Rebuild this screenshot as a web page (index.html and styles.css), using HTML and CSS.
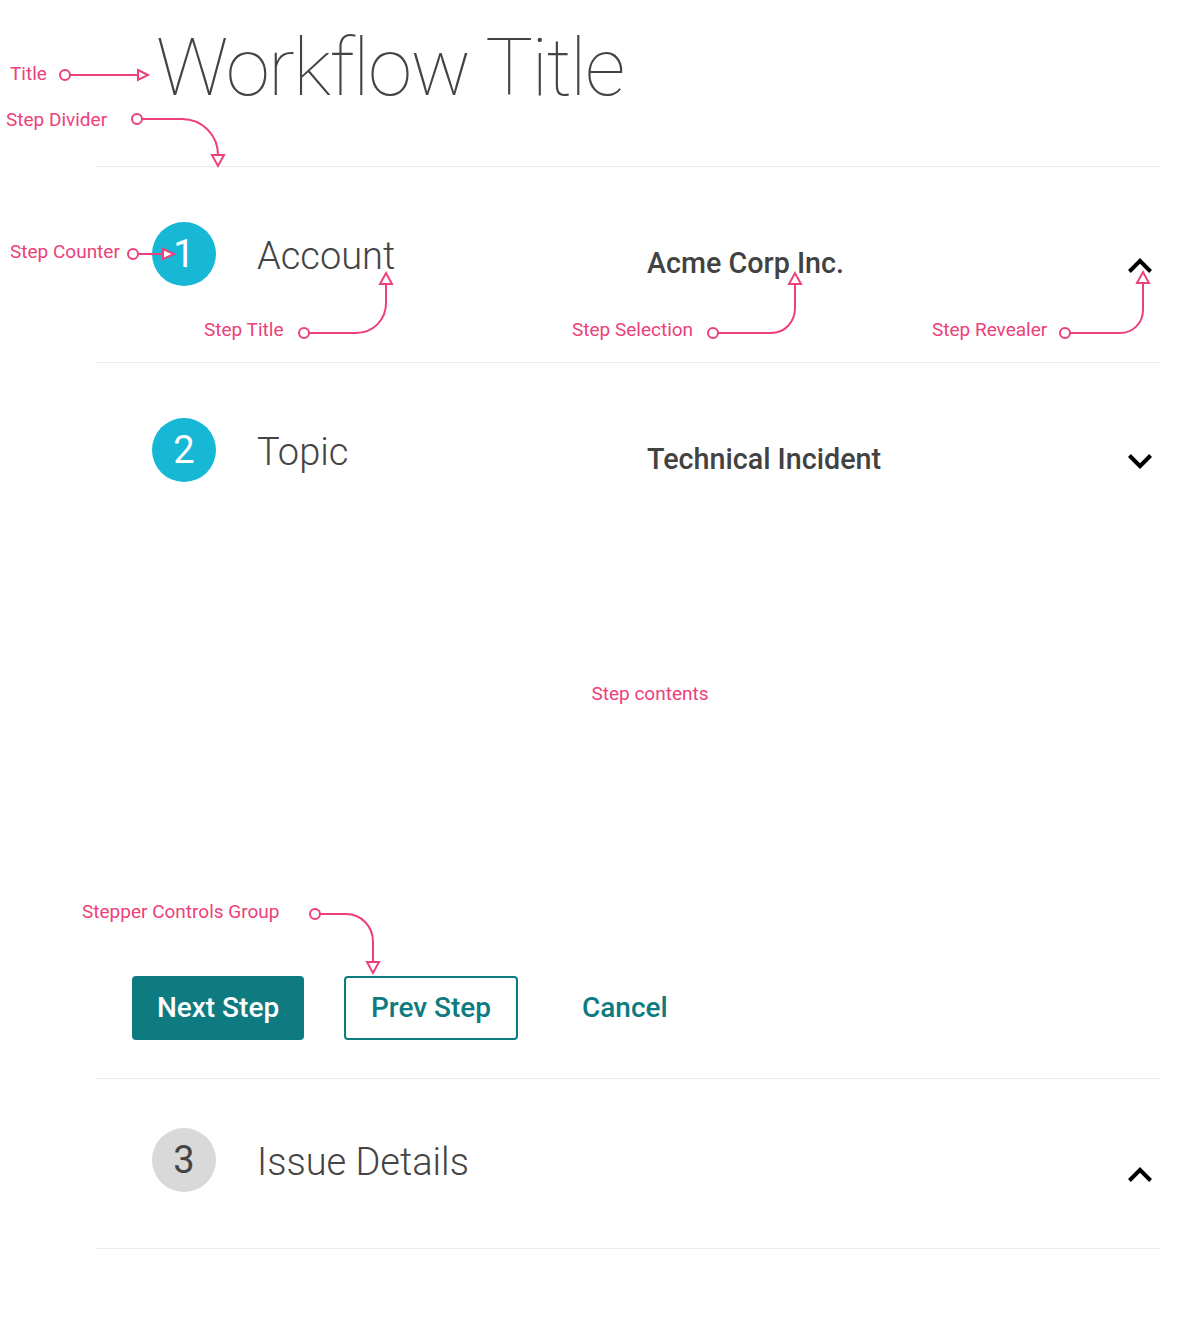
FILE: index.html
```html
<!DOCTYPE html>
<html lang="en">
<head>
<meta charset="utf-8">
<title>Workflow Title</title>
<link rel="stylesheet" href="styles.css">
</head>
<body>
<div class="page">
  <h1 class="title">Workflow Title</h1>

  <div class="steps">
    <section class="step step--first">
      <div class="step-head">
        <div class="counter">1</div>
        <div class="step-title">Account</div>
        <div class="selection">Acme Corp Inc.</div>
        <button class="revealer" aria-label="Collapse">
          <svg width="24" height="15" viewBox="6 8 12 7.41"><path d="M12 8l-6 6 1.41 1.41L12 10.83l4.59 4.58L18 14z"/></svg>
        </button>
      </div>
    </section>

    <section class="step step--open">
      <div class="step-head">
        <div class="counter">2</div>
        <div class="step-title">Topic</div>
        <div class="selection">Technical Incident</div>
        <button class="revealer" aria-label="Expand">
          <svg width="24" height="15" viewBox="6 8.59 12 7.41"><path d="M16.59 8.59L12 13.17 7.41 8.59 6 10l6 6 6-6z"/></svg>
        </button>
      </div>
      <div class="step-body">
        <p class="note">Step contents</p>
      </div>
      <div class="controls">
        <button class="btn btn--primary">Next Step</button>
        <button class="btn btn--outline">Prev Step</button>
        <button class="btn btn--text">Cancel</button>
      </div>
    </section>

    <section class="step step--last">
      <div class="step-head">
        <div class="counter counter--idle">3</div>
        <div class="step-title">Issue Details</div>
        <div class="selection"></div>
        <button class="revealer revealer--low" aria-label="Collapse">
          <svg width="24" height="15" viewBox="6 8 12 7.41"><path d="M12 8l-6 6 1.41 1.41L12 10.83l4.59 4.58L18 14z"/></svg>
        </button>
      </div>
    </section>
  </div>

  <div class="annotations">
    <span class="label label--title">Title</span>
    <span class="label label--divider">Step Divider</span>
    <span class="label label--counter">Step Counter</span>
    <span class="label label--steptitle">Step Title</span>
    <span class="label label--selection">Step Selection</span>
    <span class="label label--revealer">Step Revealer</span>
    <span class="label label--controls">Stepper Controls Group</span>
    <svg class="connectors" width="1200" height="1328" viewBox="0 0 1200 1328">
      <g class="wire">
        <path d="M70 75 H138"/>
        <path d="M142 119 H182 C202 119 218 135 218 155"/>
        <path d="M138 254 H163"/>
        <path d="M309 333 H356 C373 333 386 320 386 303 V284"/>
        <path d="M718 333 H771 C785 333 795 322 795 308 V284"/>
        <path d="M1070 333 H1120 C1133 333 1143 323 1143 310 V283"/>
        <path d="M320 914 H346 C361 914 373 926 373 942 V962"/>
      </g>
      <g class="knob">
        <circle cx="65" cy="75" r="5"/>
        <circle cx="137" cy="119" r="5"/>
        <circle cx="133" cy="254" r="5"/>
        <circle cx="304" cy="333" r="5"/>
        <circle cx="713" cy="333" r="5"/>
        <circle cx="1065" cy="333" r="5"/>
        <circle cx="315" cy="914" r="5"/>
      </g>
      <g class="head">
        <polygon points="138,70 148,75 138,80"/>
        <polygon points="212,155 224,155 218,166"/>
        <polygon points="163,249 174,254 163,259"/>
        <polygon points="380,284 392,284 386,273"/>
        <polygon points="789,284 801,284 795,273"/>
        <polygon points="1137,283 1149,283 1143,272"/>
        <polygon points="367,962 379,962 373,973"/>
      </g>
    </svg>
  </div>
</div>
</body>
</html>
```

FILE: styles.css
```css
* { box-sizing: border-box; }

html, body {
  margin: 0;
  padding: 0;
  background: #ffffff;
}

body {
  font-family: Roboto, "Noto Sans", "Liberation Sans", sans-serif;
  color: #444444;
}

.page {
  position: relative;
  width: 1200px;
  min-height: 1328px;
}

.title {
  margin: 0;
  padding: 28px 0 58px 156px;
  font-size: 80px;
  line-height: 80px;
  font-weight: 100;
  color: #444444;
  letter-spacing: -1.6px;
}

.steps {
  margin: 0 40px 0 96px;
  border-bottom: 1px solid #ececec;
}

.step {
  border-top: 1px solid #ececec;
}

.step--first { padding: 55px 0 76px; }
.step--open { padding: 55px 0 38px; }
.step--last { padding: 49px 0 56px; }

.step-head {
  display: flex;
  align-items: center;
  height: 64px;
}

.counter {
  flex: 0 0 64px;
  width: 64px;
  height: 64px;
  margin-left: 56px;
  margin-right: 41px;
  border-radius: 50%;
  background: #17b8d6;
  color: #ffffff;
  display: flex;
  align-items: center;
  justify-content: center;
  font-size: 38px;
  font-weight: 400;
  line-height: 1;
}

.counter--idle {
  background: #d9d9d9;
  color: #444444;
}

.step-title {
  flex: 0 0 390px;
  margin-top: 3px;
  font-size: 38px;
  font-weight: 300;
  line-height: 44px;
  color: #444444;
}

.selection {
  flex: 1 1 auto;
  align-self: flex-start;
  margin-top: 25px;
  font-size: 28.7px;
  font-weight: 500;
  line-height: 32px;
  color: #424242;
}

.revealer {
  flex: 0 0 24px;
  align-self: flex-start;
  margin-top: 36px;
  margin-right: 8px;
  padding: 0;
  border: 0;
  background: none;
  width: 24px;
  height: 15px;
  display: block;
}

.revealer svg { display: block; fill: #000000; }

.revealer--low { margin-top: 39px; }

.step-body {
  padding: 202px 0 272px 44px;
}

.note {
  margin: 0;
  text-align: center;
  font-size: 19px;
  line-height: 20px;
  color: #ec407a;
}

.controls {
  display: flex;
  gap: 40px;
  padding-left: 36px;
}

.btn {
  height: 64px;
  padding: 0 24px;
  border-radius: 4px;
  font-family: Roboto, "Noto Sans", "Liberation Sans", sans-serif;
  font-size: 28px;
  font-weight: 500;
  line-height: 1;
  cursor: pointer;
}

.btn--primary {
  width: 172px;
  background: #0e7b80;
  border: 0;
  color: #ffffff;
}

.btn--outline {
  width: 174px;
  background: #ffffff;
  border: 2px solid #0e7b80;
  color: #0e7b80;
}

.btn--text {
  background: none;
  border: 0;
  color: #0e7b80;
}

.annotations {
  position: absolute;
  left: 0;
  top: 0;
  width: 1200px;
  height: 1328px;
  pointer-events: none;
}

.label {
  position: absolute;
  font-size: 19px;
  line-height: 20px;
  color: #ec407a;
  white-space: nowrap;
}

.label--title { left: 10px; top: 64px; }
.label--divider { left: 6px; top: 110px; }
.label--counter { left: 10px; top: 242px; }
.label--steptitle { left: 204px; top: 320px; }
.label--selection { left: 572px; top: 320px; }
.label--revealer { left: 932px; top: 320px; }
.label--controls { left: 82px; top: 902px; }

.connectors {
  position: absolute;
  left: 0;
  top: 0;
}

.wire path {
  fill: none;
  stroke: #ec407a;
  stroke-width: 2;
}

.knob circle,
.head polygon {
  fill: #ffffff;
  stroke: #ec407a;
  stroke-width: 2;
}
```
